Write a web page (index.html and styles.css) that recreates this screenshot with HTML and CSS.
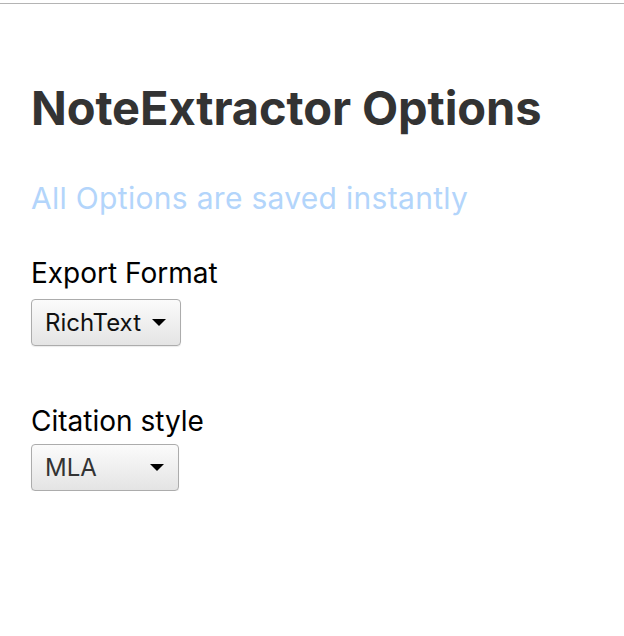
FILE: index.html
```html
<!DOCTYPE html>
<html>
<head>
<meta charset="utf-8">
<link rel="stylesheet" href="styles.css">
</head>
<body>
<div class="topline"></div>
<main class="page">
  <h1 class="title">NoteExtractor Options</h1>
  <p class="subtitle">All Options are saved instantly</p>
  <section class="field">
    <label class="label" for="fmt">Export Format</label>
    <div class="select-wrap select-wide">
      <select id="fmt" class="select">
        <option>RichText</option>
        <option>Markdown</option>
        <option>PlainText</option>
      </select>
      <svg class="arrow" width="14" height="7" viewBox="0 0 14 7"><path d="M0 0H14L7 7Z" fill="#000"/></svg>
    </div>
  </section>
  <section class="field field-second">
    <label class="label label-tight" for="cit">Citation style</label>
    <div class="select-wrap select-narrow">
      <select id="cit" class="select select-dim">
        <option>MLA</option>
        <option>APA</option>
        <option>Chicago</option>
      </select>
      <svg class="arrow" width="14" height="7" viewBox="0 0 14 7"><path d="M0 0H14L7 7Z" fill="#000"/></svg>
    </div>
  </section>
</main>
</body>
</html>
```

FILE: styles.css
```css
html, body {
  margin: 0;
  padding: 0;
  background: #fff;
}
body {
  font-family: Inter, "Noto Sans", "Liberation Sans", sans-serif;
}
.topline {
  height: 3px;
  border-bottom: 1px solid #b4b4b4;
}
.page {
  padding: 0 31px;
}
.title {
  margin: 76px 0 0;
  font-size: 47px;
  line-height: 56px;
  font-weight: 700;
  color: #333;
  letter-spacing: -0.1px;
}
.subtitle {
  margin: 44px 0 0;
  font-size: 30px;
  line-height: 36px;
  color: #b3d5fb;
  letter-spacing: 0.3px;
}
.field {
  display: flex;
  flex-direction: column;
  align-items: flex-start;
  margin-top: 40px;
}
.field-second {
  margin-top: 58px;
}
.label {
  font-size: 28px;
  line-height: 34px;
  color: #000;
  margin-bottom: 9px;
}
.label-tight {
  margin-bottom: 6px;
}
.select-wrap {
  position: relative;
  height: 47px;
}
.select-wide { width: 150px; }
.select-narrow { width: 148px; }
.select {
  appearance: none;
  -webkit-appearance: none;
  width: 100%;
  height: 100%;
  margin: 0;
  padding: 0 0 0 13px;
  border: 1px solid #acacac;
  border-radius: 4px;
  background: linear-gradient(#fbfbfb, #e4e4e4);
  box-shadow: 0 1px 1px rgba(0,0,0,0.08);
  font-family: Inter, "Noto Sans", "Liberation Sans", sans-serif;
  font-size: 24px;
  color: #111;
}
.select-dim { color: #333; }
.arrow {
  position: absolute;
  right: 15px;
  top: 20px;
  pointer-events: none;
}
```
